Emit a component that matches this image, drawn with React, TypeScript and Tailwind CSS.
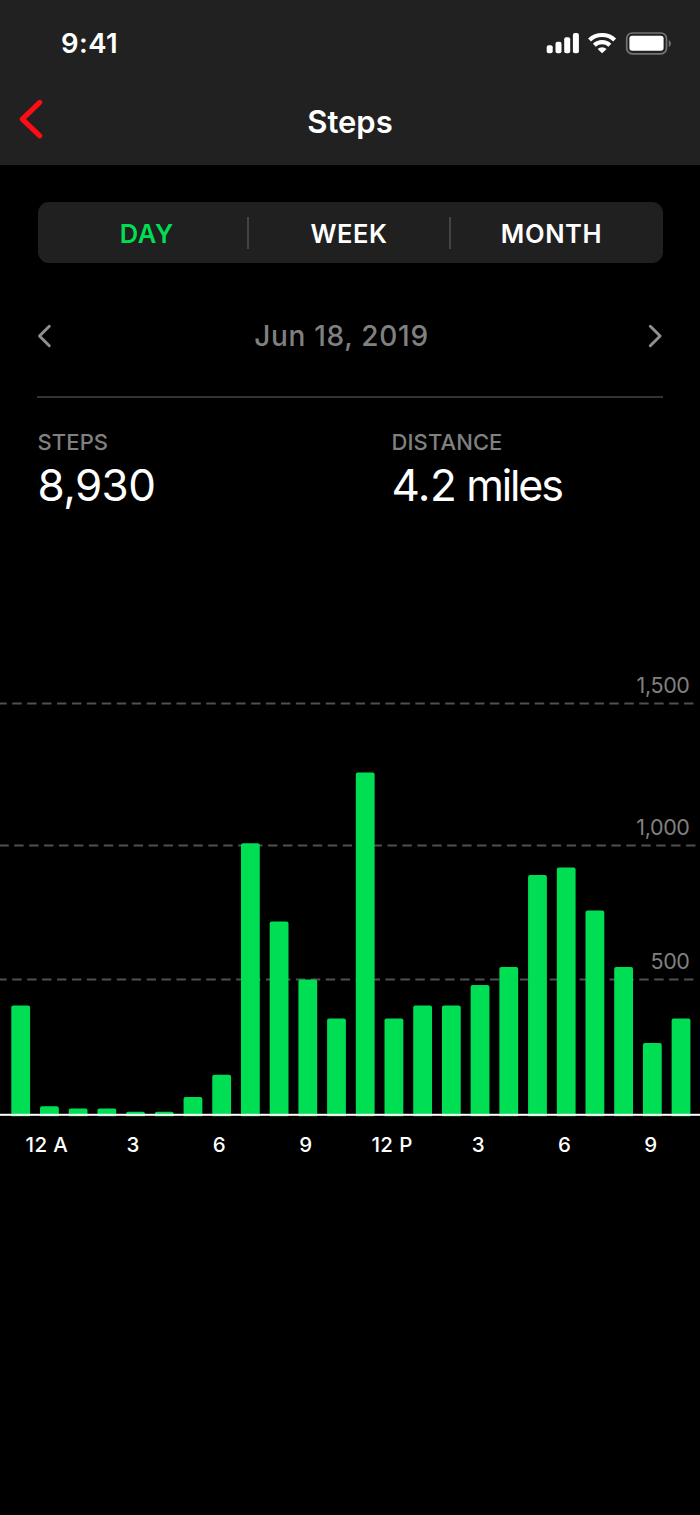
const bars = [
  1005.5, 1106.2, 1108.6, 1108.6, 1111.8, 1111.8, 1097.1, 1074.8, 843.2, 921.5, 979.6, 1018.6,
  772.4, 1018.6, 1005.5, 1005.5, 985.1, 967.1, 875.1, 867.4, 910.5, 967.1, 1043, 1018.6,
];

const grid = [
  { y: 703.4, label: '1,500', offset: 2.7, end: 694 },
  { y: 845.4, label: '1,000', offset: 0.7, end: 696 },
  { y: 979.4, label: '500', offset: 2.7, end: 694 },
];

const ticks = ['12 A', '3', '6', '9', '12 P', '3', '6', '9'];

function StatusIcons() {
  return (
    <svg className="block" width="125" height="24" viewBox="546 31 125 24" fill="#fff">
      <rect x="546.7" y="45.2" width="6" height="8" rx="2" />
      <rect x="555.5" y="41.8" width="6" height="11.4" rx="2" />
      <rect x="564.2" y="37.2" width="6" height="16" rx="2" />
      <rect x="572.9" y="33" width="6" height="20.2" rx="2" />
      <path d="M588.1 38.5a20.3 20.3 0 0 1 28 0l-2.9 3a16 16 0 0 0-22.2 0z" />
      <path d="M592.9 43.8a13.3 13.3 0 0 1 18.4 0l-2.9 2.9a9.2 9.2 0 0 0-12.6 0z" />
      <path d="M597.6 49a6.8 6.8 0 0 1 9 0l-4.5 4.2z" />
      <rect x="626.7" y="33" width="39.8" height="20.8" rx="5.6" fill="none" stroke="#737373" strokeWidth="1.7" />
      <path d="M668.8 39.9q2.2 1.2 2.2 3.5t-2.2 3.5z" fill="#737373" />
      <rect x="629.4" y="35.8" width="34.2" height="15" rx="2.8" />
    </svg>
  );
}

function Stat({ label, value, unit, className }: { label: string; value: string; unit?: string; className: string }) {
  return (
    <div className={className}>
      <div className="h-[26px] text-[22px] leading-[26px] font-medium tracking-[0.1px] text-[#808080]">{label}</div>
      <div className="mt-[3px] text-[44px] leading-[54px] tracking-[-0.6px] whitespace-nowrap">
        {value}
        {unit && <span className="text-[43px] tracking-[-2.1px]"> {unit}</span>}
      </div>
    </div>
  );
}

function Chart() {
  return (
    <svg className="block" width="700" height="520" viewBox="0 660 700 520">
      {grid.map((line) => (
        <g key={line.label}>
          <line x1="0" x2={line.end} y1={line.y} y2={line.y} stroke="#505050" strokeWidth="2" strokeDasharray="9.4 5.53" strokeDashoffset={line.offset} />
          <text x="689.6" y={line.y - 10.4} textAnchor="end" fill="#808080" fontSize="21.5" letterSpacing="-0.35">{line.label}</text>
        </g>
      ))}
      {bars.map((top, i) => (
        <path key={i} fill="#00df54" d={`M${11.3 + i * 28.71} 1116.2V${top + 2}q0-2 2-2h14.8q2 0 2 2V1116.2z`} />
      ))}
      <rect x="0" y="1113.8" width="700" height="2" fill="#fff" />
      {ticks.map((label, i) => (
        <text key={i} x={46.9 + i * 86.3} y="1152" textAnchor="middle" fill="#fff" fontSize="20.5" fontWeight="500" letterSpacing="0.4">{label}</text>
      ))}
    </svg>
  );
}

export default function App() {
  return (
    <main className="h-[1515px] w-[700px] overflow-hidden bg-black font-['Inter',sans-serif] text-white">
      <header className="h-[165px] bg-[#212121]">
        <div className="flex justify-between pt-[31px] pr-[29px] pl-[61px]">
          <span className="h-6 text-[27.5px] leading-[25px] font-semibold tracking-[0.4px]">9:41</span>
          <StatusIcons />
        </div>
        <div className="mt-[42px] grid grid-cols-[100px_1fr_100px]">
          <svg width="46" height="44" viewBox="0 97 46 44" fill="none" stroke="#ff0c15" strokeWidth="5.2" strokeLinecap="round" strokeLinejoin="round">
            <path d="M39.8 102.4 22.3 119.2 39.8 135.8" />
          </svg>
          <h1 className="pt-[5px] text-center text-[31px] leading-10 font-semibold">Steps</h1>
        </div>
      </header>

      <nav className="mx-[37.5px] mt-[37px] flex h-[61px] items-center rounded-[11px] bg-[#202020] text-[25.5px] font-semibold tracking-[0.6px]">
        <button className="w-[209.5px] pt-[3px] pl-[9px] text-[#00df54]">DAY</button>
        <span className="h-8 w-[2px] bg-[#444]" />
        <button className="w-[200px] pt-[3px]">WEEK</button>
        <span className="h-8 w-[2px] bg-[#444]" />
        <button className="w-[201px] pt-[3px]">MONTH</button>
      </nav>

      <section className="mx-[37px] mt-[33px] flex h-[102px] items-start justify-between border-b-2 border-[#333] pt-5">
        <svg className="mt-[6px]" width="16" height="28" viewBox="0 0 16 28" fill="none" stroke="#8e8e93" strokeWidth="3" strokeLinecap="round" strokeLinejoin="round">
          <path d="m12.3 4.3-9.8 9.7 9.8 9.7" />
        </svg>
        <div className="mr-[17px] text-[28px] leading-10 font-medium tracking-[0.7px] text-[#808080]">Jun 18, 2019</div>
        <svg className="mt-[6px]" width="16" height="28" viewBox="0 0 16 28" fill="none" stroke="#8e8e93" strokeWidth="3" strokeLinecap="round" strokeLinejoin="round">
          <path d="m3.3 4.3 9.8 9.7-9.8 9.7" />
        </svg>
      </section>

      <section className="flex h-[262px] pt-[31px] pl-[37.5px]">
        <Stat className="w-[354px]" label="STEPS" value="8,930" />
        <Stat className="w-[200px]" label="DISTANCE" value="4.2" unit="miles" />
      </section>

      <Chart />
    </main>
  );
}
